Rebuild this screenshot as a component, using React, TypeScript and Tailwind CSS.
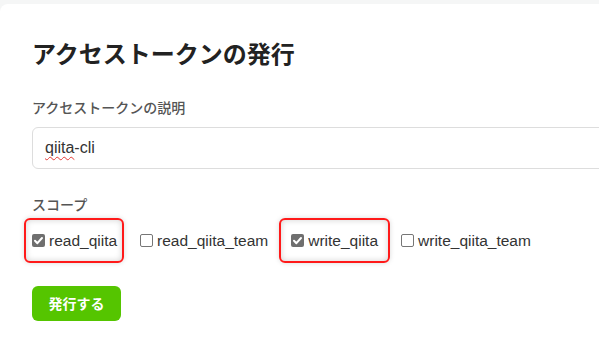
import React from "react";

const JP = "font-['Noto_Sans_CJK_JP','Noto_Sans',sans-serif]";

function CheckMark() {
  return (
    <svg viewBox="0 0 13 13" className="w-[13px] h-[13px] block">
      <rect x="0" y="0" width="13" height="13" rx="2" fill="#6f6f6f" />
      <path d="M3 6.8 L5.4 9.2 L10 4" stroke="#fff" strokeWidth="2" fill="none" strokeLinecap="round" strokeLinejoin="round" />
    </svg>
  );
}

function EmptyBox() {
  return <span className="block w-[13px] h-[13px] rounded-[2px] border border-[#767676] bg-white" />;
}

function Scope({ name, checked, mark }: { name: string; checked?: boolean; mark?: string }) {
  return (
    <label className="relative flex items-center gap-[4px]">
      {mark && (
        <span className={`absolute ${mark} -top-[11px] -bottom-[11px] rounded-[6px] border-2 border-[#ff1a1a] shadow-[inset_0_0_6px_rgba(0,0,0,0.18),0_0_5px_rgba(0,0,0,0.15)] pointer-events-none`} />
      )}
      {checked ? <CheckMark /> : <EmptyBox />}
      <span className="text-[15.5px] text-[#333] font-['Liberation_Sans',sans-serif]">{name}</span>
    </label>
  );
}

export default function App() {
  return (
    <div className="w-[599px] h-[343px] overflow-hidden bg-[#f5f6f6] pt-[4px]">
      <div className={`w-[640px] h-full bg-white rounded-tl-[8px] pl-[32px] pt-[31px] ${JP}`}>
        <h1 className="text-[24px] leading-[36px] font-bold text-[#222]">アクセストークンの発行</h1>

        <div className="mt-[26px] text-[14px] leading-[20px] font-medium text-[#555]">アクセストークンの説明</div>
        <div className="mt-[10px] w-[620px] h-[42px] rounded-[6px] border border-[#dddddd] flex items-center pl-[12px] text-[16px] text-[#333] font-['Liberation_Sans',sans-serif]">
          <span className="underline decoration-wavy decoration-[#e53935] decoration-1 underline-offset-[3px]">qiita</span>-cli
        </div>

        <div className="mt-[25px] text-[14px] leading-[20px] font-medium text-[#555]">スコープ</div>
        <div className="mt-[15px] flex items-center gap-[23px]">
          <Scope name="read_qiita" checked mark="-left-[8px] -right-[7px]" />
          <Scope name="read_qiita_team" />
          <Scope name="write_qiita" checked mark="-left-[12px] -right-[12px]" />
          <Scope name="write_qiita_team" />
        </div>

        <button className="mt-[34px] w-[89px] h-[35px] rounded-[6px] bg-[#55c500] text-white text-[14px] font-bold flex items-center justify-center">
          発行する
        </button>
      </div>
    </div>
  );
}
